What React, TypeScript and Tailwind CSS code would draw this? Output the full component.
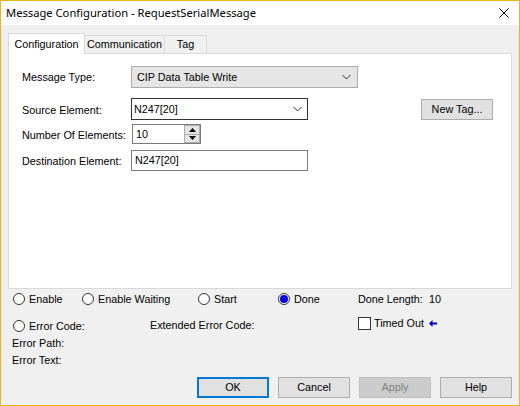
import React from 'react';

const font = { fontFamily: '"Liberation Sans", Arial, sans-serif' };

function Chevron() {
    return (
        <svg width="9" height="6" viewBox="0 0 9 6" className="shrink-0">
            <path d="M0.5 1 L4.5 5 L8.5 1" fill="none" stroke="#333" strokeWidth="1" />
        </svg>
    );
}

function Radio({ checked = false, label }: { checked?: boolean; label: string }) {
    return (
        <div className="flex items-center gap-[4px]">
            <div className="w-[12px] h-[12px] rounded-full border border-[#333] bg-white flex items-center justify-center shrink-0">
                {checked && <div className="w-[8px] h-[8px] rounded-full bg-[#0000e0]" />}
            </div>
            <span>{label}</span>
        </div>
    );
}

function Button({ label, primary = false, disabled = false }: { label: string; primary?: boolean; disabled?: boolean }) {
    return (
        <div
            className={
                'w-[72px] h-[21px] flex items-center justify-center ' +
                (primary
                    ? 'border-2 border-[#0078d7] bg-[#e1e1e1]'
                    : disabled
                    ? 'border border-[#bfbfbf] bg-[#cccccc] text-[#838383]'
                    : 'border border-[#adadad] bg-[#e1e1e1]')
            }
        >
            {label}
        </div>
    );
}

export default function App() {
    return (
        <div className="w-[520px] h-[406px] border border-[#f0b31c] bg-[#f0f0f0] flex flex-col text-[10.8px] text-black" style={font}>
            {/* title bar */}
            <div className="h-[24px] bg-white flex items-center justify-between pl-[5px] pr-[10px] shrink-0">
                <span className="text-[11.2px]" style={{ fontFamily: '"Noto Sans", "Open Sans", sans-serif' }}>
                    Message Configuration - RequestSerialMessage
                </span>
                <svg width="10" height="10" viewBox="0 0 10 10">
                    <path d="M0.5 0.5 L9.5 9.5 M9.5 0.5 L0.5 9.5" stroke="#000" strokeWidth="1" />
                </svg>
            </div>

            {/* tabs */}
            <div className="mt-[8px] ml-[7px] h-[20px] flex items-end">
                <div className="relative z-10 -mb-px h-[21px] w-[77px] bg-white border border-b-0 border-[#d9d9d9] flex items-center justify-center">
                    Configuration
                </div>
                <div className="h-[18px] w-[81px] -ml-px border border-b-0 border-[#d9d9d9] flex items-center justify-center">
                    Communication
                </div>
                <div className="h-[18px] w-[43px] -ml-px border border-b-0 border-[#d9d9d9] flex items-center justify-center">
                    Tag
                </div>
            </div>

            {/* tab page */}
            <div className="ml-[7px] w-[504px] h-[236px] bg-white border border-[#d9d9d9] pt-[12px] pl-[13px] flex flex-col">
                <div className="flex items-center h-[22px]">
                    <span className="w-[109px]">Message Type:</span>
                    <div className="w-[227px] h-[22px] bg-[#e5e5e5] border border-[#adadad] flex items-center justify-between pl-[5px] pr-[6px]">
                        <span>CIP Data Table Write</span>
                        <Chevron />
                    </div>
                </div>
                <div className="flex items-center h-[22px] mt-[10px]">
                    <span className="w-[109px] pt-[3px]">Source Element:</span>
                    <div className="w-[177px] h-[22px] bg-white border border-[#333] flex items-center justify-between pl-[2px] pr-[5px]">
                        <span>N247[20]</span>
                        <Chevron />
                    </div>
                    <div className="ml-[113px]">
                        <Button label="New Tag..." />
                    </div>
                </div>
                <div className="flex items-center h-[20px] mt-[4px]">
                    <span className="w-[110px] pt-[2px]">Number Of Elements:</span>
                    <div className="w-[69px] h-[20px] bg-white border border-[#7a7a7a] flex items-stretch justify-between pl-[3px]">
                        <span className="self-center">10</span>
                        <div className="w-[16px] flex flex-col">
                            <div className="flex-1 bg-[#e5e5e5] border border-[#adadad] flex items-center justify-center">
                                <svg width="7" height="4" viewBox="0 0 7 4">
                                    <path d="M3.5 0 L7 4 L0 4 Z" fill="#000" />
                                </svg>
                            </div>
                            <div className="flex-1 bg-[#e5e5e5] border border-t-0 border-[#adadad] flex items-center justify-center">
                                <svg width="7" height="4" viewBox="0 0 7 4">
                                    <path d="M0 0 L7 0 L3.5 4 Z" fill="#000" />
                                </svg>
                            </div>
                        </div>
                    </div>
                </div>
                <div className="flex items-center h-[21px] mt-[6px]">
                    <span className="w-[109px] pt-[2px]">Destination Element:</span>
                    <div className="w-[177px] h-[21px] bg-white border border-[#7a7a7a] flex items-center pl-[3px]">
                        N247[20]
                    </div>
                </div>
            </div>

            {/* status */}
            <div className="mt-[2px] h-[16px] flex items-center pl-[12px]">
                <div className="w-[69px]"><Radio label="Enable" /></div>
                <div className="w-[116px]"><Radio label="Enable Waiting" /></div>
                <div className="w-[80px]"><Radio label="Start" /></div>
                <div className="w-[80px]"><Radio checked label="Done" /></div>
                <span className="w-[71px]">Done Length:</span>
                <span>10</span>
            </div>
            <div className="mt-[10px] h-[16px] flex items-center pl-[12px]">
                <div className="w-[137px] pt-[2px]"><Radio label="Error Code:" /></div>
                <span className="w-[208px]">Extended Error Code:</span>
                <div className="w-[13px] h-[13px] border border-[#333] bg-white shrink-0 -mt-[4px]" />
                <span className="ml-[3px] w-[55px] -mt-[4px]">Timed Out</span>
                <svg width="8" height="7" viewBox="0 0 8 7" className="-mt-[4px]">
                    <path d="M0 3.5 L3.5 0 L3.5 2.5 L8 2.5 L8 4.5 L3.5 4.5 L3.5 7 Z" fill="#0000c0" />
                </svg>
            </div>
            <div className="mt-[3px] h-[14px] flex items-center pl-[11px]">Error Path:</div>
            <div className="mt-[3px] h-[14px] flex items-center pl-[11px]">Error Text:</div>

            <div className="mt-[10px] flex justify-end gap-[9px] pr-[7px]">
                <Button label="OK" primary />
                <Button label="Cancel" />
                <Button label="Apply" disabled />
                <Button label="Help" />
            </div>
        </div>
    );
}
